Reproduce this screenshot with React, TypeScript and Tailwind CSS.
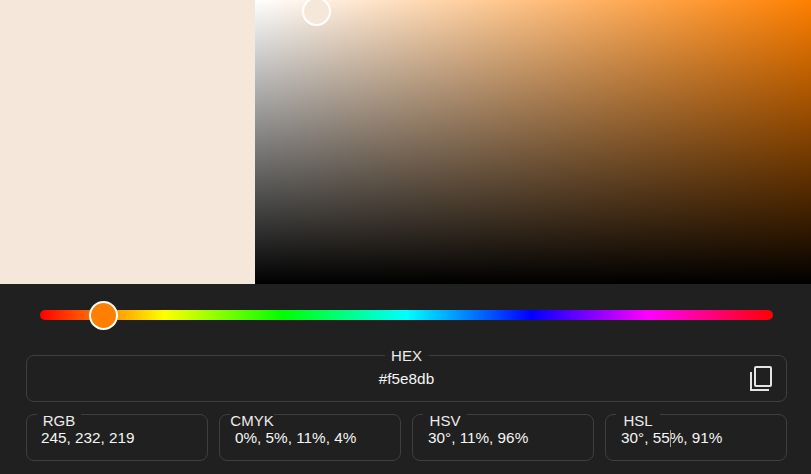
const fieldFont = "font-['Liberation_Sans',Arial,sans-serif]";

type Field = { label: string; value: string; valuePad: string; caret?: boolean };

const FIELDS: Field[] = [
  { label: "RGB", value: "245, 232, 219", valuePad: "pl-[14px]" },
  { label: "CMYK", value: "0%, 5%, 11%, 4%", valuePad: "pl-[15px]" },
  { label: "HSV", value: "30°, 11%, 96%", valuePad: "pl-[15px]" },
  { label: "HSL", value: "30°, 55%, 91%", valuePad: "pl-[15px]", caret: true },
];

function CopyIcon() {
  return (
    <svg width="22" height="25" viewBox="0 0 22 25" fill="none" stroke="#e4e4e4" strokeWidth="2">
      <rect x="5" y="1" width="16" height="19" rx="1" />
      <path d="M1 6v18h18" />
    </svg>
  );
}

function SmallField({ field }: { field: Field }) {
  return (
    <fieldset className="relative h-[47px] w-[182px] rounded-[8px] border border-[#3f3f3f] p-0">
      <legend className="ml-[10px] h-px w-[44px] text-[15px] leading-[14px] whitespace-nowrap text-[#ececec]">
        <span className="block w-[44px] text-center">{field.label}</span>
      </legend>
      <div className={`${field.valuePad} pt-[14px] text-[15.3px] leading-[18px] whitespace-pre text-[#f5f5f5]`}>
        {field.value}
      </div>
      {field.caret && <div className="absolute top-[15px] left-[64px] h-[17px] w-px bg-[#a0a0a0]" />}
    </fieldset>
  );
}

export default function App() {
  return (
    <div className={`${fieldFont} h-[474px] w-[811px] overflow-hidden bg-[#202020]`}>
      <div className="flex h-[284px]">
        <div className="w-[255px] bg-[#f5e8db]" />
        <div className="relative flex-1 bg-[#ff8000]">
          <div className="absolute inset-0 bg-gradient-to-r from-white to-transparent" />
          <div className="absolute inset-0 bg-gradient-to-b from-transparent to-black" />
          <div className="absolute top-[-3px] left-[47px] h-[29px] w-[29px] rounded-full border-2 border-white bg-[#f5e8db]" />
        </div>
      </div>

      <div className="relative mt-[26px] ml-[40px] h-[10px] w-[733px] rounded-full bg-[linear-gradient(to_right,#f00_0%,#ff0_17%,#0f0_33%,#0ff_50%,#00f_67%,#f0f_83%,#f00_100%)]">
        <div className="absolute top-[-9px] left-[49px] h-[29px] w-[29px] rounded-full border-2 border-white bg-[#ff8000]" />
      </div>

      <div className="mt-[35px] ml-[26px] flex w-[761px] flex-col gap-[12px]">
        <fieldset className="relative h-[47px] rounded-[8px] border border-[#3f3f3f] p-0 text-center">
          <legend className="mx-auto h-px w-[44px] text-[15px] leading-[14px] text-[#ececec]">
            <span className="relative -top-[6px] block text-center">HEX</span>
          </legend>
          <div className="pt-[14px] text-[15.3px] leading-[18px] text-[#f5f5f5]">#f5e8db</div>
          <div className="absolute top-[10px] right-[14px] flex">
            <CopyIcon />
          </div>
        </fieldset>
        <div className="flex gap-[11px]">
          {FIELDS.map((field) => (
            <SmallField key={field.label} field={field} />
          ))}
        </div>
      </div>
    </div>
  );
}
